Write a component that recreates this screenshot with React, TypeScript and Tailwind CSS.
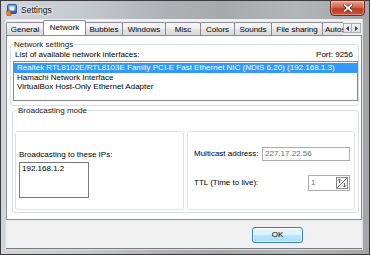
import React from "react";

function TabItem({ label, w, selected }: { label: string; w: string; selected?: boolean }) {
  if (selected) {
    return (
      <div
        className={`${w} h-[16px] -mb-[1px] -ml-[1px] relative z-10 flex-none border border-b-0 border-[#898c95] bg-white rounded-t-[2px] flex justify-center pt-[2px] leading-[10px]`}
      >
        {label}
      </div>
    );
  }
  return (
    <div
      className={`${w} h-[13px] -ml-[1px] first:ml-0 flex-none border border-b-0 border-[#898c95] bg-[linear-gradient(#f6f6f6,#eeeeee_50%,#e3e3e3_50%,#dcdcdc)] rounded-t-[2px] flex justify-center pt-[2px] leading-[10px] whitespace-nowrap overflow-hidden`}
    >
      {label}
    </div>
  );
}

export default function App() {
  return (
    <div className="w-[370px] h-[255px] overflow-hidden font-['Liberation_Sans',Arial,sans-serif] text-[8px] text-black">
      <div className="w-full h-full flex flex-col border border-[#3b3b3b] bg-[linear-gradient(90deg,#cfd5db_0%,#c5cacf_22%,#aeb1b5_45%,#a7aaad_60%,#b3b6b9_80%,#a3a5a8_100%)] relative">
        {/* title bar */}
        <div className="h-[18px] shrink-0 flex items-center pl-[5px] pb-[1px]">
          <svg width="11" height="12" viewBox="0 0 11 12">
            <defs>
              <linearGradient id="ib" x1="0" y1="0" x2="0" y2="1">
                <stop offset="0" stopColor="#7fb2ec" />
                <stop offset="1" stopColor="#2456a8" />
              </linearGradient>
            </defs>
            <rect x="1.5" y="0.5" width="9" height="9" rx="1.5" fill="url(#ib)" stroke="#1d3f7a" strokeWidth="0.8" />
            <rect x="3.5" y="2.5" width="5" height="4" fill="#e8f2fd" />
            <path d="M0.5 7 L4.5 7 L5 11.5 L1 11.5 Z" fill="#f08a1c" stroke="#a34d00" strokeWidth="0.6" />
          </svg>
          <span className="ml-[4px] text-[8.5px] leading-[10px] text-[#101010] [text-shadow:0_0_5px_#ffffff,0_0_3px_#ffffff]">
            Settings
          </span>
        </div>
        {/* close button */}
        <div className="absolute top-[-1px] left-[329px] w-[35px] h-[16px] rounded-b-[4px] border border-[#6e2b22] bg-[linear-gradient(#e8a394,#d0684f_45%,#bf3a20_55%,#c9573c)] flex items-center justify-center shadow-[inset_0_0_0_1px_rgba(255,255,255,0.35)]">
          <svg width="10" height="8" viewBox="0 0 10 8">
            <path d="M1.5 1 L8.5 7 M8.5 1 L1.5 7" stroke="#4a1a12" strokeWidth="3" strokeLinecap="square" />
            <path d="M1.5 1 L8.5 7 M8.5 1 L1.5 7" stroke="#ffffff" strokeWidth="1.8" strokeLinecap="square" />
          </svg>
        </div>

        {/* client wrapper */}
        <div className="flex-1 ml-[4px] mr-[6px] mb-[4px] border-x border-b border-[#dedede] flex">
          <div className="flex-1 flex flex-col bg-[#f0f0f0] min-w-0">
            {/* tab strip */}
            <div className="h-[16px] shrink-0 flex items-end">
              <div className="flex-1 min-w-0 overflow-hidden flex items-end h-full">
                <TabItem label="General" w="w-[38px]" />
                <TabItem label="Network" w="w-[43px]" selected />
                <TabItem label="Bubbles" w="w-[38px]" />
                <TabItem label="Windows" w="w-[44px]" />
                <TabItem label="Misc" w="w-[36px]" />
                <TabItem label="Colors" w="w-[35px]" />
                <TabItem label="Sounds" w="w-[38px]" />
                <TabItem label="File sharing" w="w-[52px]" />
                <div className="w-[40px] h-[13px] -ml-[1px] flex-none border border-b-0 border-[#898c95] bg-[linear-gradient(#f6f6f6,#eeeeee_50%,#e3e3e3_50%,#dcdcdc)] rounded-t-[2px] pt-[2px] pl-[2px] leading-[10px] whitespace-nowrap">
                  Autostart
                </div>
              </div>
              <div className="flex mb-[2px] mr-[1px]">
                <div className="w-[9px] h-[10px] border border-[#acacac] bg-[linear-gradient(#f4f4f4,#dcdcdc)] flex items-center justify-center">
                  <svg width="3" height="5" viewBox="0 0 3 5"><path d="M3 0 L0 2.5 L3 5 Z" fill="#26407a" /></svg>
                </div>
                <div className="w-[9px] h-[10px] border border-l-0 border-[#acacac] bg-[linear-gradient(#f4f4f4,#dcdcdc)] flex items-center justify-center">
                  <svg width="3" height="5" viewBox="0 0 3 5"><path d="M0 0 L3 2.5 L0 5 Z" fill="#26407a" /></svg>
                </div>
              </div>
            </div>

            {/* tab panel */}
            <div className="h-[185px] shrink-0 border border-[#898c95] bg-white flex flex-col">
              {/* Network settings */}
              <fieldset className="mt-[4px] ml-[3px] mr-[2px] border border-[#d5dfe5] rounded-[3px] pb-[4px]">
                <legend className="ml-[2px] px-[1px] leading-[9px] text-[#151515]">Network settings</legend>
                <div className="flex justify-between pt-[1px] pl-[4px] pr-[5px] leading-[10px] h-[11px]">
                  <span>List of available network interfaces:</span>
                  <span>Port: 9256</span>
                </div>
                <div className="mt-[1px] ml-[2px] mr-[0px] h-[40px] border border-[#828790] bg-white pt-[1px] whitespace-nowrap overflow-hidden">
                  <div className="h-[10px] leading-[10px] bg-[#3399ff] text-white pl-[3px]">
                    Realtek RTL8102E/RTL8103E Family PCI-E Fast Ethernet NIC (NDIS 6.20) (192.168.1.3)
                  </div>
                  <div className="h-[9px] leading-[9px] pl-[3px]">Hamachi Network Interface</div>
                  <div className="h-[10px] leading-[10px] pl-[3px]">VirtualBox Host-Only Ethernet Adapter</div>
                </div>
              </fieldset>

              {/* Broadcasting mode */}
              <fieldset className="ml-[5px] mr-[2px] border border-[#d5dfe5] rounded-[3px] pb-[2px]">
                <legend className="ml-[4px] px-[1px] leading-[9px] text-[#151515]">Broadcasting mode</legend>
                <div className="mt-[16px] ml-[2px] mr-[3px] flex gap-[3px]">
                  <div className="w-[169px] h-[79px] border border-[#dce3e8] rounded-[3px] pl-[3px]">
                    <div className="mt-[18px] leading-[10px]">Broadcasting to these IPs:</div>
                    <div className="mt-[2px] w-[70px] h-[36px] border border-[#7a7a7a] pt-[1px] pl-[2px] leading-[10px]">
                      192.168.1.2
                    </div>
                  </div>
                  <div className="flex-1 h-[79px] border border-[#dce3e8] rounded-[3px] pl-[6px] flex flex-col">
                    <div className="mt-[15px] flex items-center h-[14px]">
                      <span className="w-[68px] leading-[10px]">Multicast address:</span>
                      <div className="w-[88px] h-[14px] border border-[#abadb3] bg-white pl-[2px] flex items-center leading-[10px] text-[#6d6d6d]">
                        227.17.22.56
                      </div>
                    </div>
                    <div className="mt-[14px] flex items-center h-[16px]">
                      <span className="w-[114px] leading-[10px]">TTL (Time to live):</span>
                      <div className="w-[42px] h-[16px] border border-[#abadb3] bg-white pl-[2px] pr-[1px] flex items-center justify-between leading-[10px] text-[#6d6d6d]">
                        <span>1</span>
                        <svg width="12" height="12" viewBox="0 0 12 12">
                          <rect x="0.5" y="0.5" width="11" height="11" fill="#f4f4f4" stroke="#8a8a8a" />
                          <path d="M1 11 L11 1" stroke="#7a7a7a" strokeWidth="1" />
                          <path d="M3.5 6 L3.5 2 M2 3.5 L3.5 2 L5 3.5" stroke="#555" strokeWidth="0.9" fill="none" />
                          <path d="M8.5 6 L8.5 10 M7 8.5 L8.5 10 L10 8.5" stroke="#555" strokeWidth="0.9" fill="none" />
                        </svg>
                      </div>
                    </div>
                  </div>
                </div>
              </fieldset>
            </div>

            {/* bottom buttons */}
            <div className="flex-1 flex justify-end items-start pt-[7px] pr-[59px] border-b border-[#7a7a7a]">
              <button className="w-[51px] h-[16px] rounded-[3px] border border-[#3c7fb1] bg-[linear-gradient(#eaf6fd,#d9f0fc_50%,#bee6fd_50%,#a7d9f5)] shadow-[inset_0_0_0_1px_rgba(255,255,255,0.7)] flex items-center justify-center leading-[10px] text-black">
                OK
              </button>
            </div>
          </div>
        </div>
      </div>
    </div>
  );
}
